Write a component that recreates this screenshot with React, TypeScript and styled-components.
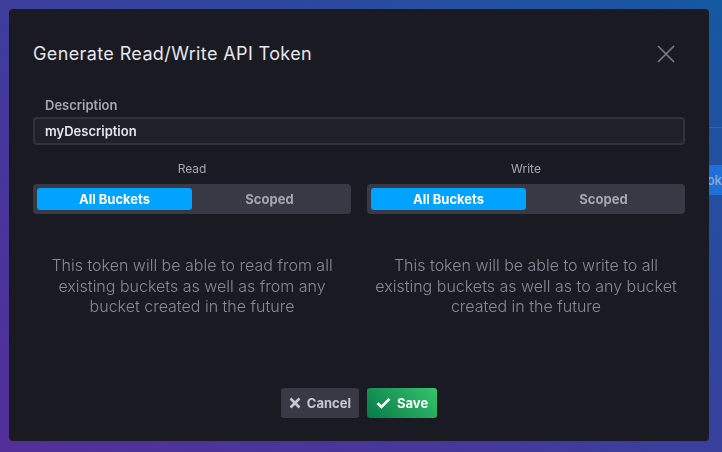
import React, { useState } from "react";
import styled, { createGlobalStyle } from "styled-components";

const GlobalStyle = createGlobalStyle`
    html, body {
        margin: 0;
        padding: 0;
        width: 100%;
        height: 100%;
        overflow: hidden;
    }
    body {
        font-family: Inter, "Noto Sans", sans-serif;
    }
`;

type Mode = "all" | "scoped";

const App = () => {
    const [readMode, setReadMode] = useState<Mode>("all");
    const [writeMode, setWriteMode] = useState<Mode>("all");
    const [description, setDescription] = useState("myDescription");

    return (
        <>
            <GlobalStyle />
            <Page>
                <PageHeader />
                <PageToolbar>
                    <PageButton>Tok</PageButton>
                </PageToolbar>
            </Page>
            <Overlay>
                <Dialog>
                    <Header>
                        <Title>Generate Read/Write API Token</Title>
                        <CloseButton aria-label="close">
                            <svg width="18" height="18" viewBox="0 0 18 18">
                                <path
                                    d="M1 1L17 17M17 1L1 17"
                                    stroke="#7d7f8c"
                                    strokeWidth="1.6"
                                    fill="none"
                                />
                            </svg>
                        </CloseButton>
                    </Header>
                    <Body>
                        <Field>
                            <Label>Description</Label>
                            <Input
                                value={description}
                                onChange={(e) => setDescription(e.target.value)}
                            />
                        </Field>
                        <Columns>
                            <PermissionColumn
                                title="Read"
                                mode={readMode}
                                setMode={setReadMode}
                                text="This token will be able to read from all existing buckets as well as from any bucket created in the future"
                            />
                            <PermissionColumn
                                title="Write"
                                mode={writeMode}
                                setMode={setWriteMode}
                                text="This token will be able to write to all existing buckets as well as to any bucket created in the future"
                            />
                        </Columns>
                    </Body>
                    <Footer>
                        <ActionButton $variant="default">
                            <svg width="12" height="12" viewBox="0 0 12 12">
                                <path
                                    d="M1.5 1.5L10.5 10.5M10.5 1.5L1.5 10.5"
                                    stroke="#c6c9d3"
                                    strokeWidth="2.6"
                                    fill="none"
                                />
                            </svg>
                            Cancel
                        </ActionButton>
                        <ActionButton $variant="success">
                            <svg width="15" height="12" viewBox="0 0 15 12">
                                <path
                                    d="M1.5 6.2L5.4 10L13.5 1.8"
                                    stroke="#ffffff"
                                    strokeWidth="2.6"
                                    fill="none"
                                />
                            </svg>
                            Save
                        </ActionButton>
                    </Footer>
                </Dialog>
            </Overlay>
        </>
    );
};

const PermissionColumn = ({
    title,
    mode,
    setMode,
    text,
}: {
    title: string;
    mode: Mode;
    setMode: (m: Mode) => void;
    text: string;
}) => (
    <Column>
        <ColumnTitle>{title}</ColumnTitle>
        <Toggle>
            <ToggleOption $active={mode === "all"} onClick={() => setMode("all")}>
                All Buckets
            </ToggleOption>
            <ToggleOption
                $active={mode === "scoped"}
                onClick={() => setMode("scoped")}
            >
                Scoped
            </ToggleOption>
        </Toggle>
        <Explanation>{text}</Explanation>
    </Column>
);

export default App;

const Page = styled.div`
    width: 722px;
    height: 452px;
    background: linear-gradient(
        35deg,
        #533097 0%,
        #45389a 35%,
        #2f469e 65%,
        #1559a3 100%
    );
    display: flex;
    flex-direction: column;
`;

const PageHeader = styled.div`
    height: 128px;
    margin-left: 360px;
    border-bottom: 1px solid #2d66ae;
    box-sizing: border-box;
`;

const PageToolbar = styled.div`
    display: flex;
    justify-content: flex-end;
    padding-top: 37px;
`;

const PageButton = styled.div`
    width: 24px;
    height: 30px;
    padding-left: 6px;
    overflow: hidden;
    background: #1e6fd8;
    color: #86a6d9;
    font-size: 13px;
    font-weight: 600;
    display: flex;
    align-items: center;
    justify-content: flex-start;
    direction: rtl;
`;

const Overlay = styled.div`
    position: fixed;
    inset: 0;
    padding: 9px;
`;

const Dialog = styled.div`
    width: 700px;
    height: 432px;
    box-sizing: border-box;
    background: #1a1a22;
    border-radius: 4px;
    display: flex;
    flex-direction: column;
`;

const Header = styled.div`
    display: flex;
    align-items: center;
    justify-content: space-between;
    padding: 33px 34px 0 24px;
    height: 24px;
    box-sizing: content-box;
`;

const Title = styled.h2`
    margin: 0;
    font-size: 18px;
    font-weight: 400;
    letter-spacing: 0.38px;
    color: #e6e7eb;
    line-height: 24px;
`;

const CloseButton = styled.button`
    background: none;
    border: none;
    padding: 0;
    display: flex;
    cursor: pointer;
`;

const Body = styled.div`
    padding: 31px 24px 0;
    display: flex;
    flex-direction: column;
`;

const Field = styled.div`
    display: flex;
    flex-direction: column;
`;

const Label = styled.label`
    font-size: 13px;
    font-weight: 600;
    color: #a4a7b3;
    padding-left: 12px;
    line-height: 16px;
    margin-bottom: 4px;
`;

const Input = styled.input`
    height: 28px;
    box-sizing: border-box;
    background: #202029;
    border: 2px solid #32323f;
    border-radius: 4px;
    padding: 0 10px;
    font-family: Inter, "Noto Sans", sans-serif;
    font-size: 13px;
    font-weight: 600;
    color: #e6e7ee;
    outline: none;
`;

const Columns = styled.div`
    display: grid;
    grid-template-columns: 1fr 1fr;
    gap: 16px;
    margin-top: 17px;
`;

const Column = styled.div`
    display: flex;
    flex-direction: column;
    align-items: stretch;
`;

const ColumnTitle = styled.div`
    text-align: center;
    font-size: 12px;
    color: #a4a7b3;
    line-height: 14px;
    margin-bottom: 8px;
`;

const Toggle = styled.div`
    display: grid;
    grid-template-columns: 1fr 1fr;
    height: 30px;
    box-sizing: border-box;
    padding: 4px;
    background: #393946;
    border-radius: 4px;
`;

const ToggleOption = styled.button<{ $active: boolean }>`
    border: none;
    border-radius: 3px;
    font-family: Inter, "Noto Sans", sans-serif;
    font-size: 13px;
    font-weight: 700;
    cursor: pointer;
    background: ${(p) => (p.$active ? "#00a3ff" : "transparent")};
    color: ${(p) => (p.$active ? "#ffffff" : "#a4a7b3")};
`;

const Explanation = styled.p`
    margin: 41px 0 0;
    text-align: center;
    font-size: 16px;
    font-weight: 300;
    line-height: 20.5px;
    color: #878a98;
`;

const Footer = styled.div`
    margin-top: auto;
    display: flex;
    justify-content: center;
    gap: 8px;
    padding-bottom: 23px;
`;

const ActionButton = styled.button<{ $variant: "default" | "success" }>`
    height: 30px;
    display: flex;
    align-items: center;
    gap: 6px;
    padding: 0 ${(p) => (p.$variant === "success" ? "9px" : "8px")};
    border: none;
    border-radius: 3px;
    font-family: Inter, "Noto Sans", sans-serif;
    font-size: 13px;
    font-weight: 700;
    cursor: pointer;
    color: ${(p) => (p.$variant === "success" ? "#ffffff" : "#c6c9d3")};
    background: ${(p) =>
        p.$variant === "success"
            ? "linear-gradient(45deg, #07794a 0%, #35c46a 100%)"
            : "#393946"};
`;
